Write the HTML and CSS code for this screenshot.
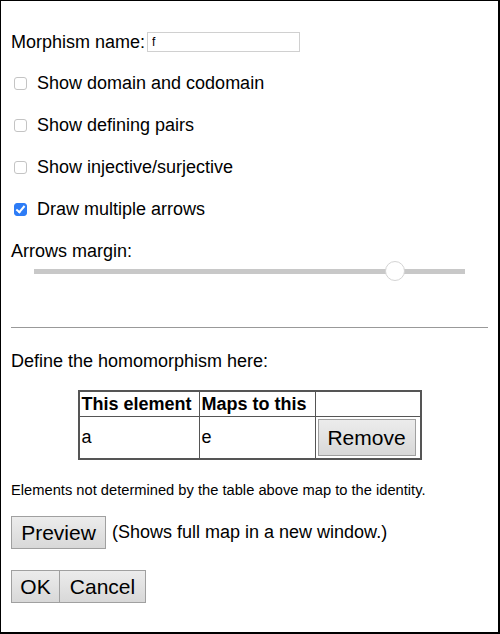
FILE: index.html
```html
<!DOCTYPE html>
<html>
<head>
<meta charset="utf-8">
<link rel="stylesheet" href="styles.css">
</head>
<body>
<div class="frame">
  <div class="name-row"><span>Morphism name:</span><input class="name-input" type="text" value="f"></div>
  <label class="check-row"><input type="checkbox" class="cb"><span>Show domain and codomain</span></label>
  <label class="check-row"><input type="checkbox" class="cb"><span>Show defining pairs</span></label>
  <label class="check-row"><input type="checkbox" class="cb"><span>Show injective/surjective</span></label>
  <label class="check-row"><input type="checkbox" class="cb" checked><span>Draw multiple arrows</span></label>
  <div class="margin-label">Arrows margin:</div>
  <div class="slider-row"><input class="slider" type="range" min="0" max="100" step="any" value="85.4"></div>
  <hr class="rule">
  <div class="define">Define the homomorphism here:</div>
  <table class="map">
    <tr class="head"><th class="c1">This element</th><th class="c2">Maps to this</th><th class="c3"></th></tr>
    <tr class="body"><td>a</td><td>e</td><td class="btn-cell"><button class="btn remove">Remove</button></td></tr>
  </table>
  <div class="note">Elements not determined by the table above map to the identity.</div>
  <div class="preview-row"><button class="btn preview">Preview</button><span class="hint">(Shows full map in a new window.)</span></div>
  <div class="ok-row"><button class="btn ok">OK</button><button class="btn cancel">Cancel</button></div>
</div>
</body>
</html>
```
FILE: styles.css
```css
html, body {
  margin: 0;
  padding: 0;
  background: #fff;
}
body {
  font-family: "Liberation Sans", Arial, sans-serif;
  font-size: 18px;
  color: #000;
}
.frame {
  box-sizing: border-box;
  width: 500px;
  height: 634px;
  border-top: 1px solid #000;
  border-left: 1px solid #000;
  border-right: 2px solid #000;
  border-bottom: 2px solid #000;
  padding: 31px 10px 0 10px;
}
.name-row {
  display: flex;
  align-items: center;
  height: 20px;
}
.name-input {
  box-sizing: border-box;
  margin: 0 0 0 2px;
  width: 153px;
  height: 20px;
  border: 1px solid #d0d0d0;
  padding: 0 4px;
  font-family: "Liberation Sans", Arial, sans-serif;
  font-size: 12px;
  color: #000;
  outline: none;
}
.check-row {
  display: flex;
  align-items: center;
  height: 42px;
}
.check-row:first-of-type { margin-top: 10px; }
.cb {
  -webkit-appearance: none;
  appearance: none;
  box-sizing: border-box;
  flex: 0 0 13px;
  width: 13px;
  height: 13px;
  min-width: 13px;
  margin: 0 10px 0 3px;
  border: 1px solid #c4c4c4;
  border-radius: 3px;
  background: #fff;
  position: relative;
}
.cb:checked {
  background: #2d7cf6;
  border-color: #2d7cf6;
}
.cb:checked::after {
  content: "";
  position: absolute;
  left: 3px;
  top: 0px;
  width: 3px;
  height: 7px;
  border-right: 2px solid #fff;
  border-bottom: 2px solid #fff;
  transform: rotate(40deg);
}
.margin-label {
  margin-top: 10px;
  height: 22px;
  line-height: 22px;
}
.slider-row {
  height: 18px;
  display: flex;
  align-items: center;
  padding-left: 23px;
}
.slider {
  -webkit-appearance: none;
  appearance: none;
  width: 431px;
  height: 20px;
  margin: 0;
  padding: 0;
  background: transparent;
}
.slider::-webkit-slider-runnable-track {
  height: 5px;
  background: #c8c8c8;
  border: none;
}
.slider::-webkit-slider-thumb {
  -webkit-appearance: none;
  width: 20px;
  height: 20px;
  margin-top: -8px;
  border-radius: 50%;
  background: #fff;
  border: 1px solid #d4d4d4;
  box-sizing: border-box;
}
.rule {
  margin: 47px 0 0 0;
  border: none;
  border-top: 1px solid #999;
  height: 0;
}
.define {
  margin-top: 22px;
  height: 22px;
  line-height: 22px;
}
.map {
  margin: 18px auto 0 auto;
  border-collapse: collapse;
  border: 2px solid #555;
}
.map th, .map td {
  border: 1px solid #555;
  padding: 0 2px;
  text-align: left;
  font-size: 18px;
}
.map th {
  height: 24px;
  font-weight: bold;
}
.map .c1 { width: 115px; }
.map .c2 { width: 111px; }
.map .c3 { width: 100px; }
.map .body td {
  height: 39px;
}
.map .btn-cell {
  padding: 1px 2px;
}
.btn {
  font-family: "Liberation Sans", Arial, sans-serif;
  font-size: 21px;
  color: #000;
  background: linear-gradient(#ececec, #d8d8d8);
  border: 1px solid #a0a0a0;
  margin: 0;
  box-sizing: border-box;
  display: block;
}
.remove {
  width: 98px;
  height: 37px;
  padding: 0;
}
.note {
  margin-top: 21px;
  font-size: 14.7px;
  height: 18px;
  line-height: 18px;
}
.preview-row {
  margin-top: 17px;
  display: flex;
  align-items: center;
  height: 33px;
}
.preview {
  width: 95px;
  height: 33px;
  padding: 0;
}
.hint {
  margin-left: 6px;
}
.ok-row {
  margin-top: 21px;
  display: flex;
  height: 33px;
}
.ok {
  width: 49px;
  height: 33px;
  padding: 0;
}
.cancel {
  width: 86px;
  height: 33px;
  padding: 0;
  border-left: none;
}
```
